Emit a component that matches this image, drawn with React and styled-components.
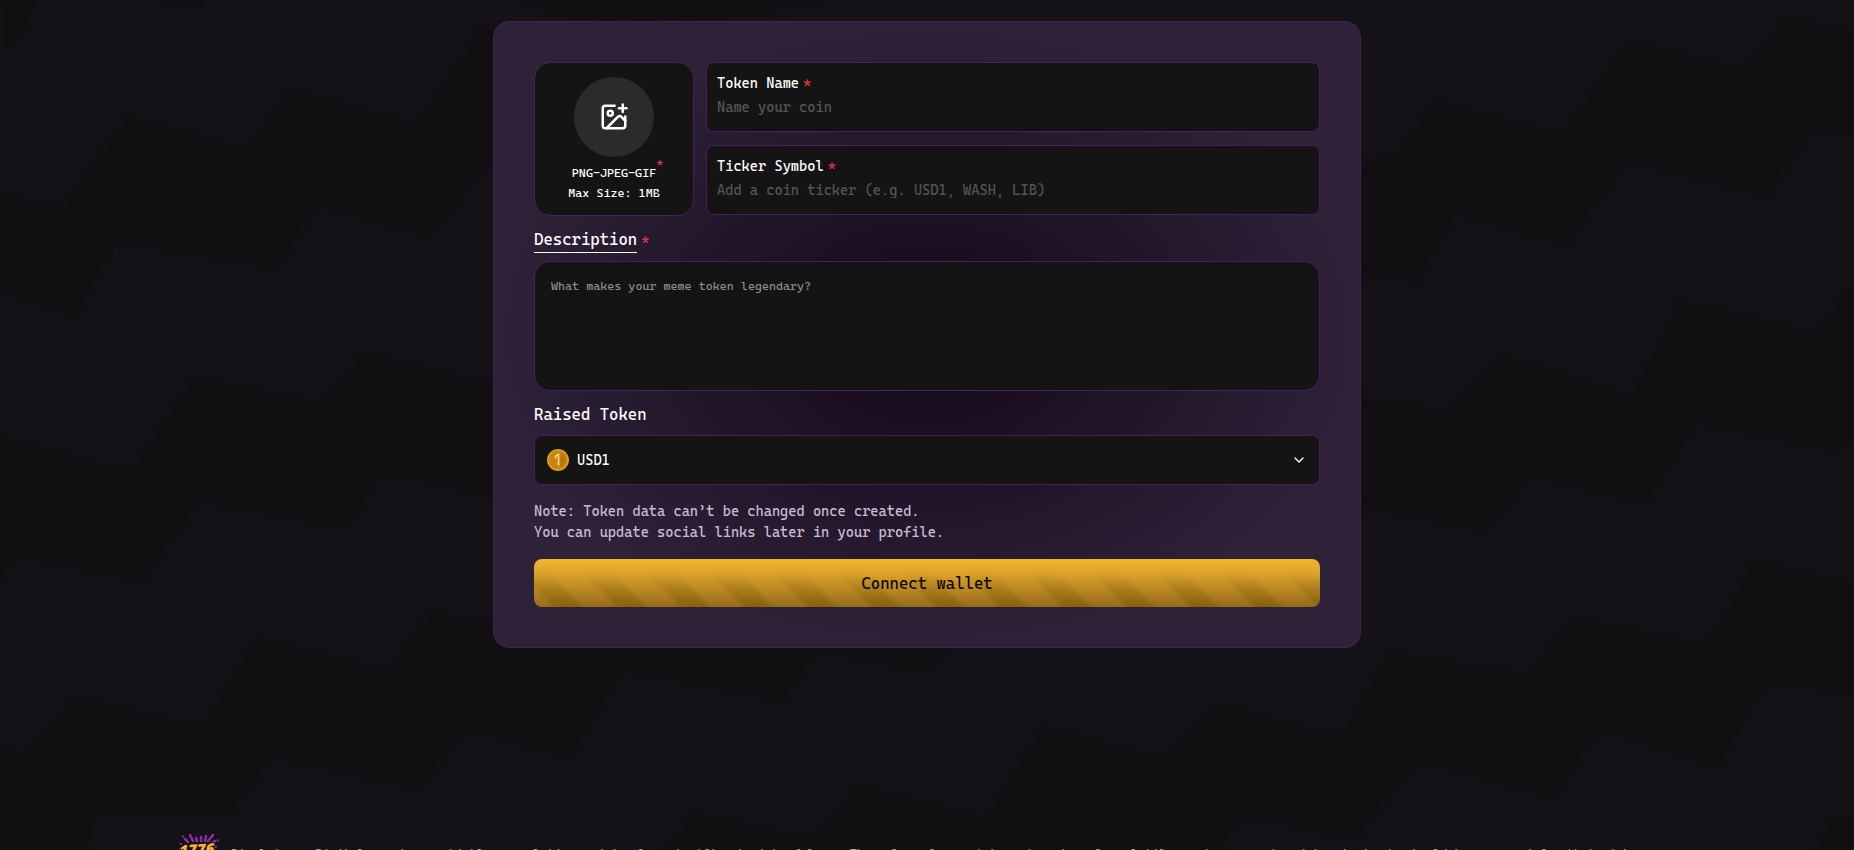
import React, {useState} from 'react';

import styled, {createGlobalStyle} from 'styled-components';
import { ImagePlus, ChevronDown } from 'lucide-react';

const GlobalStyle = createGlobalStyle`
    *, *::before, *::after {
        box-sizing: border-box;
    }
    html {
        scrollbar-width: none;
    }
    body {
        margin: 0;
        background: #151217;
        color: #fff;
        font-family: 'Cascadia Mono', 'DejaVu Sans Mono', monospace;
        font-size: 14px;
    }
    input, textarea, select, button {
        font-family: inherit;
    }
`
const Page = styled.div`
    position: relative;
    min-height: 100vh;
    padding: 21px 20px 0;
    overflow: hidden;
`
const Backdrop = styled.svg`
    position: absolute;
    inset: 0;
    z-index: -1;
    width: 100%;
    height: 100vh;
`
const Card = styled.form`
    max-width: 868px;
    margin: 0 auto;
    padding: 40px;
    border: 1px solid #43204f;
    border-radius: 16px;
    background: radial-gradient(ellipse closest-side, #160b1a 0%, #1b0f21 30%, #2d2238 100%) #2d2238;
`
const TopRow = styled.div`
    display: flex;
    align-items: flex-start;
    gap: 12px;
`
const UploadBox = styled.label`
    display: flex;
    flex-direction: column;
    align-items: center;
    width: 160px;
    height: 154px;
    padding-top: 14px;
    border: 1px solid #4a1f57;
    border-radius: 16px;
    background: #141414;
    font-size: 12px;
    font-weight: 500;
    line-height: 20px;
    cursor: pointer;
`
const FileInput = styled.input`
    display: none;
`
const UploadCircle = styled.span`
    display: flex;
    align-items: center;
    justify-content: center;
    width: 80px;
    height: 80px;
    margin-bottom: 6px;
    border-radius: 50%;
    background: #2b2b2b;
`
const Formats = styled.span`
    position: relative;
`
const Star = styled.span`
    margin-left: 4px;
    color: #e0364c;
    font-size: 14px;
`
const CornerStar = styled.span`
    position: absolute;
    top: -10px;
    left: 100%;
    color: #e0364c;
`
const Fields = styled.div`
    display: flex;
    flex: 1;
    flex-direction: column;
    gap: 13px;
`
const Field = styled.div`
    height: 70px;
    padding: 8px 10px;
    border: 1px solid #4a1f57;
    border-radius: 8px;
    background: #141414;
`
const FieldLabel = styled.label`
    display: block;
    font-weight: 500;
    line-height: 24px;
`
const FieldInput = styled.input`
    display: block;
    width: 100%;
    height: 24px;
    padding: 0;
    border: none;
    outline: none;
    background: none;
    color: #fff;
    font-size: 14px;
    &::placeholder {
        color: #555;
        opacity: 1;
    }
`
const SectionLabel = styled.label`
    display: block;
    margin: 12px 0 8px;
    font-size: 16px;
    line-height: 24px;
`
const Underlined = styled.span`
    display: inline-block;
    border-bottom: 1px solid #fff;
`
const Description = styled.textarea`
    display: block;
    width: 100%;
    height: 130px;
    padding: 16px;
    border: 1px solid #4a1f57;
    border-radius: 16px;
    outline: none;
    resize: none;
    background: #141414;
    color: #fff;
    font-size: 12px;
    line-height: 16px;
    &::placeholder {
        color: #8c8c8c;
        opacity: 1;
    }
`
const SelectBox = styled.div`
    display: flex;
    align-items: center;
    height: 50px;
    padding: 0 12px;
    border: 1px solid #4a1f57;
    border-radius: 8px;
    background: #141414;
`
const TokenSelect = styled.select`
    flex: 1;
    height: 100%;
    margin: 0 -16px 0 0;
    padding: 0 16px 0 8px;
    border: none;
    outline: none;
    appearance: none;
    background: none;
    color: #fff;
    font-size: 14px;
`
const Chevron = styled(ChevronDown)`
    pointer-events: none;
`
const Note = styled.p`
    margin: 16px 0;
    color: #cdb9d6;
    line-height: 21px;
`
const ConnectBtn = styled.button`
    position: relative;
    display: block;
    width: 100%;
    height: 48px;
    border: none;
    border-radius: 8px;
    overflow: hidden;
    background: linear-gradient(#f2b52d 0%, #e0a62b 25%, #966a1c 100%);
    color: #0b0805;
    font-size: 16px;
    font-weight: 500;
    cursor: pointer;
    &::before {
        content: '';
        position: absolute;
        inset: 0;
        background: repeating-linear-gradient(45deg, transparent 0 11px, #6e5500 17px, #6e5500 31px, transparent 37px 45px);
        mask-image: linear-gradient(transparent 30%, rgba(0, 0, 0, .4) 100%);
    }
`
const BtnText = styled.span`
    position: relative;
`
const Footer = styled.footer`
    display: flex;
    align-items: center;
    gap: 10px;
    max-width: 1496px;
    height: 56px;
    margin: 185px auto 0;
    padding-bottom: 16px;
`
const Disclaimer = styled.p`
    margin: 0;
    color: #a3a3a3;
    font-size: 12px;
    line-height: 16px;
    white-space: nowrap;
`

const Waves = () => (
    <Backdrop viewBox="0 0 1854 850" preserveAspectRatio="xMidYMid slice" fill="#110f11" aria-hidden="true">
        <filter id="soften" colorInterpolationFilters="sRGB">
            <feGaussianBlur stdDeviation="3" />
        </filter>
        <g filter="url(#soften)">
            <path d="M0 0H40L28 28 0 57ZM140 0H210L200 12Z" />
            <path d="M500 0H860L700 20 600 24Z" />
            <path d="M-20 188 0 191 63 206 127 114 247 146 290 87 417 122 480 27 560 40 560 180 490 163 430 238 317 209 277 271 117 244 77 320 0 295H-20Z" />
            <path d="M-20 434H0L130 469 193 374 323 401 363 350 480 379 560 390 560 515 490 499 383 474 347 531 200 504 143 583 17 558 0 585H-20Z" />
            <path d="M-20 745H0L27 751 77 694 200 726 257 634 390 669 430 610 560 632 600 560 960 560 960 640 928 675 819 653 784 703 624 673 572 760 467 732 417 791 273 759 230 818 100 813 80 870H-20Z" />
            <path d="M650 870 692 810 813 837 859 783 985 815 1043 723 1163 758 1220 702 1341 735 1364 690 1390 650 1530 672 1573 615 1707 642 1753 558 1874 588V700L1767 683 1720 770 1600 732 1553 799 1417 764 1377 813 1358 843 1243 817 1210 870Z" />
            <path d="M1300 200 1380 157 1403 146 1433 98 1563 133 1627 38 1743 68 1787 16 1874 30V140L1810 135 1767 198 1627 163 1567 247 1457 217 1417 285 1300 260Z" />
            <path d="M1300 380 1363 396 1450 409 1500 352 1630 393 1680 298 1817 331 1874 250V430L1837 453 1697 425 1647 507 1530 477 1487 534 1363 509 1300 500Z" />
            <path d="M1804 870 1830 815 1874 820V870Z" />
        </g>
    </Backdrop>
)

const Coin = () => (
    <svg width="22" height="22" viewBox="0 0 22 22" aria-hidden="true">
        <circle cx="11" cy="11" r="11" fill="#c98a12" />
        <circle cx="11" cy="11" r="10" fill="none" stroke="#f3bd3a" strokeWidth="1" strokeDasharray="2 1" />
        <circle cx="11" cy="11" r="8.5" fill="#c98410" />
        <path d="M14 4.500 18.500 9A8 8 0 0 1 13 18Z" fill="#b87209" />
        <path d="M8 7.500 11.500 5.500V16.500M8.500 9.500V7.500" fill="none" stroke="#ffd873" strokeWidth="1.600" />
    </svg>
)

const Logo = () => (
    <svg width="42" height="40" viewBox="0 0 42 40" role="img" aria-label="1776">
        <g stroke="#8a2fa8" strokeWidth="2.500" strokeLinecap="round">
            <path d="M11 2 14 8M17 5 18 8M22 4V8M27 3 26 8M34 2 29 8M6 6 9 9M36 8 33 10" />
            <path d="M8 35 12 30M16 38 17 32M25 38V32M33 36 29 31" />
        </g>
        <g stroke="#6a3fa0" strokeWidth="2" strokeDasharray="2 3" fill="none">
            <path d="M2 10C0 18 0 24 4 30M36 13C40 17 40 22 37 30M3 4 7 2M38 7 40 8" />
        </g>
        <text x="18" y="22" textAnchor="middle" fill="#f5b52c" stroke="#1a0d1e" strokeWidth="2" paintOrder="stroke" fontFamily="Open Sans, sans-serif" fontStyle="italic" fontWeight="800" fontSize="15" transform="rotate(-3 18 18)">1776</text>
    </svg>
)

const App = () => {

    const [name, setName] = useState('')
    const [ticker, setTicker] = useState('')
    const [description, setDescription] = useState('')

    return (
        <Page>
            <GlobalStyle />
            <Waves />
            <Card onSubmit={(event) => event.preventDefault()}>
                <TopRow>
                    <UploadBox>
                        <FileInput type="file" accept="image/png,image/jpeg,image/gif" />
                        <UploadCircle><ImagePlus size={30} /></UploadCircle>
                        <Formats>PNG-JPEG-GIF<CornerStar>*</CornerStar></Formats>
                        <span>Max Size: 1MB</span>
                    </UploadBox>
                    <Fields>
                        <Field>
                            <FieldLabel htmlFor="name">Token Name<Star>*</Star></FieldLabel>
                            <FieldInput id="name" value={name} onChange={(event) => setName(event.target.value)} placeholder="Name your coin" />
                        </Field>
                        <Field>
                            <FieldLabel htmlFor="ticker">Ticker Symbol<Star>*</Star></FieldLabel>
                            <FieldInput id="ticker" value={ticker} onChange={(event) => setTicker(event.target.value)} placeholder="Add a coin ticker (e.g. USD1, WASH, LIB)" />
                        </Field>
                    </Fields>
                </TopRow>
                <SectionLabel htmlFor="description"><Underlined>Description</Underlined><Star>*</Star></SectionLabel>
                <Description id="description" value={description} onChange={(event) => setDescription(event.target.value)} placeholder="What makes your meme token legendary?" />
                <SectionLabel htmlFor="raised">Raised Token</SectionLabel>
                <SelectBox>
                    <Coin />
                    <TokenSelect id="raised">
                        <option>USD1</option>
                    </TokenSelect>
                    <Chevron size={16} />
                </SelectBox>
                <Note>
                    Note: Token data can’t be changed once created.<br />
                    You can update social links later in your profile.
                </Note>
                <ConnectBtn type="button"><BtnText>Connect wallet</BtnText></ConnectBtn>
            </Card>
            <Footer>
                <Logo />
                <Disclaimer>
                    Disclaimer: Digital assets are highly speculative and involve significant risk of loss. The value of meme tokens is extremely volatile, and anyone who wishes to trade should be prepared for that risk.
                </Disclaimer>
            </Footer>
        </Page>
    );
}

export default App;
